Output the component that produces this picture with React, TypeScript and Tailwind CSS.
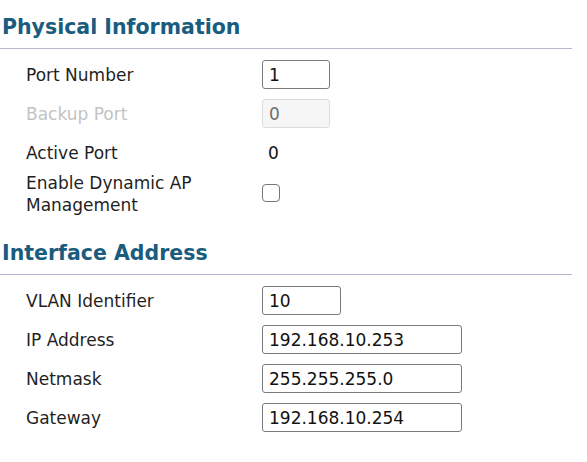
import React from 'react';

interface FieldRow {
  label: string;
  disabled?: boolean;
}

const Heading: React.FC<{ title: string; top: string }> = ({ title, top }) => (
  <h2
    className={`${top} pb-[8px] pl-[2px] mr-[15px] border-b border-[#b7b7d1] text-[20.5px] leading-[26px] font-bold text-[#1a5c7e]`}
  >
    {title}
  </h2>
);

const Row: React.FC<FieldRow & { children: React.ReactNode; className?: string }> = ({
  label,
  disabled,
  children,
  className,
}) => (
  <div className={`flex items-center pl-[26px] ${className ?? 'py-[5px]'}`}>
    <div className={`w-[236px] ${disabled ? 'text-[#c3c3c3]' : 'text-[#1f1f1f]'}`}>{label}</div>
    <div className="flex items-center min-h-[29px]">{children}</div>
  </div>
);

const TextBox: React.FC<{ value: string; width: string; disabled?: boolean }> = ({
  value,
  width,
  disabled,
}) => (
  <input
    readOnly
    value={value}
    disabled={disabled}
    className={`${width} h-[29px] rounded-[3px] border px-[6px] text-[17px] outline-none font-['DejaVu_Sans',sans-serif] ${
      disabled
        ? 'bg-[#f6f6f6] border-[#dcdcdc] text-[#6d6d6d]'
        : 'bg-white border-[#7a7a7a] text-[#111]'
    }`}
  />
);

export default function App() {
  return (
    <div className="w-[587px] h-[462px] bg-white font-['DejaVu_Sans',sans-serif] text-[17px] leading-[22px]">
      <Heading title="Physical Information" top="pt-[14px]" />
      <div className="pt-[6px]">
        <Row label="Port Number">
          <TextBox value="1" width="w-[68px]" />
        </Row>
        <Row label="Backup Port" disabled>
          <TextBox value="0" width="w-[68px]" disabled />
        </Row>
        <Row label="Active Port">
          <span className="pl-[6px] text-[#111]">0</span>
        </Row>
        <Row label="Enable Dynamic AP Management" className="py-0">
          <span className="block w-[18px] h-[18px] rounded-[4px] border-[1.5px] border-[#767676] bg-white -mt-[2px]" />
        </Row>
      </div>
      <Heading title="Interface Address" top="pt-[24px]" />
      <div className="pt-[6px]">
        <Row label="VLAN Identifier">
          <TextBox value="10" width="w-[79px]" />
        </Row>
        <Row label="IP Address">
          <TextBox value="192.168.10.253" width="w-[200px]" />
        </Row>
        <Row label="Netmask">
          <TextBox value="255.255.255.0" width="w-[200px]" />
        </Row>
        <Row label="Gateway">
          <TextBox value="192.168.10.254" width="w-[200px]" />
        </Row>
      </div>
    </div>
  );
}
